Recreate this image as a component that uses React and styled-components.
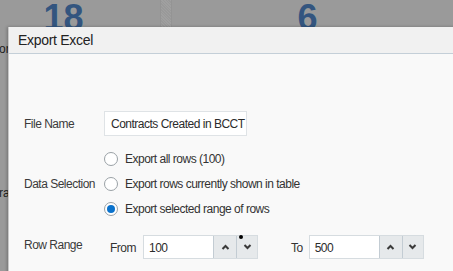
import React from "react";
import styled, { createGlobalStyle } from "styled-components";

const Global = createGlobalStyle`
  html, body { margin: 0; padding: 0; }
  body {
    background: #9a9a9a;
    font-family: "Liberation Sans", Arial, sans-serif;
    overflow: hidden;
  }
`;

const Page = styled.div`
  position: relative;
  width: 453px;
  height: 271px;
  overflow: hidden;
  background: #9a9a9a;
`;

const Backdrop = styled.div`
  display: flex;
  height: 27px;
  overflow: hidden;
`;

const Tile = styled.div`
  width: ${(p) => p.$w};
  flex: ${(p) => (p.$grow ? 1 : "none")};
  height: 27px;
  overflow: hidden;
  display: flex;
  flex-direction: column;
  align-items: center;
`;

const BigNum = styled.div`
  font-family: "Liberation Sans", Arial, sans-serif;
  font-weight: bold;
  font-size: 36px;
  line-height: 24px;
  height: 24px;
  padding-top: 6px;
  color: #33557f;
  margin-left: ${(p) => p.$ml || "0"};
`;

const Divider = styled.div`
  width: 10px;
  height: 27px;
  background: repeating-linear-gradient(
    45deg,
    #999 0px,
    #999 1px,
    #a0a0a0 1px,
    #a0a0a0 2px
  );
  border-left: 1px solid #949494;
  border-right: 1px solid #949494;
`;

const Peek = styled.span`
  position: absolute;
  left: -1px;
  top: ${(p) => p.$top}px;
  font-size: 12px;
  color: #1e1e1e;
`;

const Dialog = styled.div`
  position: absolute;
  left: 8px;
  top: 27px;
  right: -20px;
  bottom: -20px;
  background: #f9f9f9;
  border-left: 1px solid #c8c8c8;
  box-shadow: -1px 0 3px rgba(0, 0, 0, 0.25);
  display: flex;
  flex-direction: column;
`;

const Header = styled.div`
  height: 26px;
  background: #f1f1f1;
  border-bottom: 1px solid #c4cfd8;
  display: flex;
  align-items: center;
  padding-left: 9px;
  font-size: 14px;
  letter-spacing: -0.3px;
  color: #222;
`;

const Body = styled.div`
  padding: 57px 0 0 15px;
  display: flex;
  flex-direction: column;
  font-size: 12px;
  letter-spacing: -0.5px;
  color: #333;
`;

const Row = styled.div`
  display: flex;
  align-items: ${(p) => p.$align || "center"};
  margin-top: ${(p) => p.$mt || 0}px;
`;

const Label = styled.div`
  width: 80px;
  flex: none;
  color: #3b3b3b;
  padding-top: ${(p) => p.$pt || 0}px;
`;

const TextInput = styled.div`
  width: 143px;
  height: 25px;
  box-sizing: border-box;
  border: 1px solid #dfe3e6;
  background: #fff;
  display: flex;
  align-items: center;
  padding-left: 6px;
  color: #2b2b2b;
`;

const RadioGroup = styled.div`
  display: flex;
  flex-direction: column;
`;

const RadioRow = styled.div`
  height: 25px;
  display: flex;
  align-items: center;
  gap: 7px;
  color: #333;
`;

const RadioCircle = styled.span`
  width: 14px;
  height: 14px;
  box-sizing: border-box;
  border-radius: 50%;
  border: 1px solid #9aa1a6;
  background: #fff;
  display: flex;
  align-items: center;
  justify-content: center;
  &::after {
    content: "";
    width: 8px;
    height: 8px;
    border-radius: 50%;
    background: ${(p) => (p.$checked ? "#0a72cc" : "transparent")};
  }
`;

const Range = styled.div`
  display: flex;
  align-items: center;
  padding-left: 6px;
`;

const RangeLabel = styled.span`
  margin-right: ${(p) => p.$mr}px;
  margin-left: ${(p) => p.$ml || 0}px;
  padding-top: 2px;
`;

const Spinner = styled.div`
  position: relative;
  display: flex;
  width: 115px;
  height: 24px;
  box-sizing: border-box;
  border: 1px solid #d6dce0;
  background: #fff;
`;

const SpinValue = styled.div`
  flex: 1;
  display: flex;
  align-items: center;
  padding-left: 5px;
  padding-top: 1px;
  color: #2b2b2b;
`;

const SpinBtn = styled.div`
  width: ${(p) => p.$w}px;
  background: #e6e9eb;
  border-left: 1px solid #c3ccd3;
  display: flex;
  align-items: center;
  justify-content: center;
`;

const Cursor = styled.span`
  position: absolute;
  left: 95px;
  top: -1px;
  width: 4px;
  height: 4px;
  border-radius: 50%;
  background: #000;
`;

const Chevron = ({ up }) => (
  <svg width="9" height="6" viewBox="0 0 9 6">
    <polyline
      points={up ? "1.5,5 4.5,2 7.5,5" : "1.5,1 4.5,4 7.5,1"}
      fill="none"
      stroke="#3a3a3a"
      strokeWidth="2"
    />
  </svg>
);

const Spin = ({ value, cursor }) => (
  <Spinner>
    <SpinValue>{value}</SpinValue>
    <SpinBtn $w={22}>
      <Chevron up />
    </SpinBtn>
    <SpinBtn $w={20}>
      <Chevron />
    </SpinBtn>
    {cursor && <Cursor />}
  </Spinner>
);

export default function App() {
  return (
    <Page>
      <Global />
      <Backdrop>
        <Tile $w="160px">
          <BigNum $ml="-33px">18</BigNum>
        </Tile>
        <Divider />
        <Tile $grow>
          <BigNum $ml="-10px">6</BigNum>
        </Tile>
      </Backdrop>
      <Peek $top={42}>or</Peek>
      <Peek $top={186}>ra</Peek>
      <Dialog>
        <Header>Export Excel</Header>
        <Body>
          <Row>
            <Label>File Name</Label>
            <TextInput>Contracts Created in BCCT</TextInput>
          </Row>
          <Row $mt={10}>
            <Label>Data Selection</Label>
            <RadioGroup>
              <RadioRow>
                <RadioCircle />
                Export all rows (100)
              </RadioRow>
              <RadioRow>
                <RadioCircle />
                Export rows currently shown in table
              </RadioRow>
              <RadioRow>
                <RadioCircle $checked />
                Export selected range of rows
              </RadioRow>
            </RadioGroup>
          </Row>
          <Row $mt={14} $align="flex-start">
            <Label $pt={3}>Row Range</Label>
            <Range>
              <RangeLabel $mr={7}>From</RangeLabel>
              <Spin value="100" cursor />
              <RangeLabel $ml={33} $mr={6}>To</RangeLabel>
              <Spin value="500" />
            </Range>
          </Row>
        </Body>
      </Dialog>
    </Page>
  );
}
